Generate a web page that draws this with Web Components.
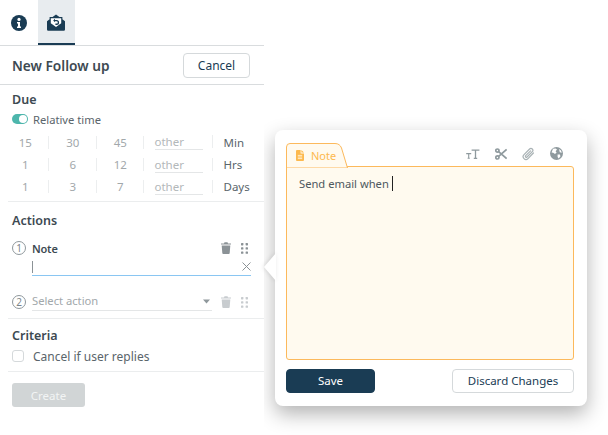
<!DOCTYPE html>
<html>
<head>
<meta charset="utf-8">
<style>
  html, body { margin: 0; padding: 0; background: #fff; }
  body { width: 608px; height: 435px; overflow: hidden; position: relative; font-family: "Noto Sans", sans-serif; color: #3d4a52; }
</style>
</head>
<body>
<fu-panel>
  <fu-tabs></fu-tabs>
  <fu-header title="New Follow up"></fu-header>
  <fu-section heading="Due" style="--pad-top:6px; --pad-bottom:4px">
    <fu-toggle>Relative time</fu-toggle>
    <fu-time-row values="15,30,45" unit="Min"></fu-time-row>
    <fu-time-row values="1,6,12" unit="Hrs"></fu-time-row>
    <fu-time-row values="1,3,7" unit="Days"></fu-time-row>
  </fu-section>
  <fu-section heading="Actions" style="--pad-top:10px; --pad-bottom:9px">
    <fu-action num="1" label="Note" active></fu-action>
    <fu-action num="2" label="Select action"></fu-action>
  </fu-section>
  <fu-section heading="Criteria" style="--pad-top:8px; --pad-bottom:7px">
    <fu-check>Cancel if user replies</fu-check>
  </fu-section>
  <fu-create>Create</fu-create>
</fu-panel>
<fu-popover>Send email when</fu-popover>

<script>
const NAVY = '#1a3c54';

const icons = {
  info: `<svg width="16" height="16" viewBox="0 0 16 16"><circle cx="8" cy="8" r="8" fill="${NAVY}"/><circle cx="8" cy="4.4" r="1.6" fill="#fff"/><path d="M6 7h3v4.6h1v1.5H6v-1.5h1V8.5H6z" fill="#fff"/></svg>`,
  mail: `<svg width="18" height="17" viewBox="0 0 18 17"><path d="M0 7.2 2.6 5.2V3h3L9 .4 12.4 3h3v2.2L18 7.2V15.6a1.2 1.2 0 0 1-1.2 1.2H1.2A1.2 1.2 0 0 1 0 15.6z" fill="${NAVY}"/><path d="M3.8 4.2h10.4v5L9 13 3.8 9.2z" fill="#fff"/><path d="M6.2 6.6 8 4.8v1.1h1.6a2.5 2.5 0 0 1 0 5H8.4V9.6h1.2a1.2 1.2 0 0 0 0-2.4H8v1.1z" fill="${NAVY}"/></svg>`,
  trash: `<svg width="10" height="12" viewBox="0 0 10 12"><path d="M0 1.4h3L3.5.3h3L7 1.4h3v1.2H0zM.7 3.4h8.6L8.7 11a1 1 0 0 1-1 1H2.3a1 1 0 0 1-1-1z" fill="currentColor"/></svg>`,
  grip: `<svg width="7" height="11" viewBox="0 0 7 11"><g fill="currentColor"><rect x="0" y="0" width="2.4" height="2.4" rx=".6"/><rect x="4.6" y="0" width="2.4" height="2.4" rx=".6"/><rect x="0" y="4.2" width="2.4" height="2.4" rx=".6"/><rect x="4.6" y="4.2" width="2.4" height="2.4" rx=".6"/><rect x="0" y="8.4" width="2.4" height="2.4" rx=".6"/><rect x="4.6" y="8.4" width="2.4" height="2.4" rx=".6"/></g></svg>`,
  close: `<svg width="9" height="9" viewBox="0 0 9 9"><path d="M.5.5l8 8M8.5.5l-8 8" stroke="#8b9296" stroke-width="1" fill="none"/></svg>`,
  doc: `<svg width="8" height="11" viewBox="0 0 8 11"><path d="M0 1a1 1 0 0 1 1-1h3.6v3.4H8V10a1 1 0 0 1-1 1H1a1 1 0 0 1-1-1zM5.4 0 8 2.6H5.4z" fill="#fdb94e"/><path d="M1.8 5.4h4.4M1.8 7h4.4M1.8 8.6h4.4" stroke="#fff7e6" stroke-width=".8"/></svg>`,
  textSize: `<svg width="14" height="10" viewBox="0 0 14 10"><g fill="none" stroke="#8f9a9e" stroke-width="1.3"><path d="M5.6 1.1H13.4M9.5 1v8.2M7.8 9.3h3.4"/><path d="M.2 4.6h5M2.7 4.6v4.6M1.6 9.3h2.2" stroke-width="1.1"/></g></svg>`,
  cut: `<svg width="12" height="12" viewBox="0 0 12 12"><g fill="none" stroke="#8f9a9e" stroke-width="1.7"><circle cx="2.4" cy="2.6" r="1.6"/><circle cx="2.4" cy="9.4" r="1.6"/><path d="M3.6 3.6 11.6 10.6M3.6 8.4 11.6 1.4"/></g></svg>`,
  clip: `<svg width="13" height="14" viewBox="0 0 13 14"><path d="M11.4 6 6 11.6a2.8 2.8 0 0 1-4-4L7.6 2a1.9 1.9 0 0 1 2.7 2.7L5 10a.9.9 0 0 1-1.3-1.3L8.6 3.8" fill="none" stroke="#a9b2b5" stroke-width="1.2" stroke-linecap="round"/></svg>`,
  globe: `<svg width="13" height="13" viewBox="0 0 13 13"><circle cx="6.5" cy="6.5" r="6.5" fill="#8f9a9e"/><path d="M3 1.8 5.6 1.4 7 2.6 5.6 4.2 6.6 5.4 5 7 3.2 5.8 1.6 5.6ZM7.6 7.4 10 7.6 10.4 9.4 8.6 11.4 7.6 10ZM9 2l2 1.4.8 2.4-2-.6z" fill="#fff"/></svg>`,
  arrow: `<svg width="7" height="5" viewBox="0 0 7 5"><path d="M0 .5h7L3.500 4.500z" fill="currentColor"/></svg>`
};

// small helper so each component only writes its css + html
class Base extends HTMLElement {
  render(html) {
    if (!this.shadowRoot) this.attachShadow({mode: 'open'});
    this.shadowRoot.innerHTML = html;
  }
}

class FuPanel extends Base {
  connectedCallback() {
    this.render(`<style>
      :host { display: block; width: 264px; height: 435px; background: #fff; position: relative; z-index: 2; box-sizing: border-box; }
    </style><slot></slot>`);
  }
}

class FuTabs extends Base {
  connectedCallback() {
    this.render(`<style>
      :host { display: flex; height: 46px; box-sizing: border-box; border-bottom: 1px solid #d9dcde; }
      .tab { width: 37.5px; height: 45px; box-sizing: border-box; display: flex; align-items: center; justify-content: center; padding-top: 1px; }
      .tab.on { background: #e8ecef; border-bottom: 2px solid ${NAVY}; padding-top: 2px; }
    </style>
    <div class="tab">${icons.info}</div>
    <div class="tab on">${icons.mail}</div>`);
  }
}

class FuHeader extends Base {
  connectedCallback() {
    this.render(`<style>
      :host { display: flex; align-items: center; justify-content: space-between; height: 38px; padding: 0 14px 0 12px; border-bottom: 1px solid #d9dcde; box-sizing: content-box; }
      h1 { margin: 0; font-size: 13.7px; font-weight: 600; color: #3d4a52; }
      button { width: 67px; height: 25px; border: 1px solid #d5d9db; border-radius: 4px; background: #fff; color: ${NAVY}; font: 12px "Noto Sans", sans-serif; padding: 0; }
    </style>
    <h1>${this.getAttribute('title')}</h1><button>Cancel</button>`);
  }
}

class FuSection extends Base {
  connectedCallback() {
    this.render(`<style>
      :host { display: block; padding: var(--pad-top) 0 var(--pad-bottom) 12px; position: relative; }
      :host::after { content: ""; position: absolute; left: 8px; right: 0; bottom: 0; height: 1px; background: #ebedee; }
      h2 { margin: 0 0 3px; font-size: 12.5px; line-height: 17px; font-weight: 600; color: #3d4a52; }
    </style>
    <h2>${this.getAttribute('heading')}</h2><slot></slot>`);
  }
}

class FuToggle extends Base {
  connectedCallback() {
    this.render(`<style>
      :host { display: flex; align-items: center; gap: 5px; height: 16px; font-size: 11.2px; color: #5a656b; margin-bottom: 4px; }
      .t { width: 16px; height: 10px; border-radius: 5px; background: #4db6ac; position: relative; }
      .t::after { content: ""; position: absolute; right: 1px; top: 1px; width: 8px; height: 8px; border-radius: 50%; background: #fff; }
    </style><span class="t"></span><slot></slot>`);
  }
}

class FuTimeRow extends Base {
  connectedCallback() {
    const vals = this.getAttribute('values').split(',');
    this.render(`<style>
      :host { display: flex; align-items: center; height: 22.4px; margin-left: -10.5px; font-size: 11.5px; color: #a2a8ab; }
      .c { width: 47.5px; text-align: center; position: relative; }
      .c::after, .o::after { content: ""; position: absolute; right: 0; top: 1px; height: 13px; width: 1px; background: #eceeef; }
      .o { width: 68.5px; position: relative; box-sizing: border-box; }
      .o span { display: block; margin-left: 10.5px; width: 48px; line-height: 15px; border-bottom: 1px solid #e4e6e7; color: #b3b8ba; }
      .u { padding-left: 11px; color: #5a656b; }
    </style>
    ${vals.map(v => `<div class="c">${v}</div>`).join('')}
    <div class="o"><span>other</span></div><div class="u">${this.getAttribute('unit')}</div>`);
  }
}

class FuAction extends Base {
  connectedCallback() {
    const active = this.hasAttribute('active');
    const body = active
      ? `<div class="row"><span class="label">${this.getAttribute('label')}</span><span class="ic">${icons.trash}</span><span class="gr">${icons.grip}</span></div>
         <div class="input"><i></i><b>${icons.close}</b></div>`
      : `<div class="row dim"><span class="sel">${this.getAttribute('label')}<em>${icons.arrow}</em></span><span class="ic">${icons.trash}</span><span class="gr">${icons.grip}</span></div>`;
    this.render(`<style>
      :host { display: block; position: relative; padding-left: 20px; padding-right: 13px; font-size: 11.2px; color: #5a656b; }
      :host([active]) { margin: 11px 0 18px; }
      .num { position: absolute; left: 0; top: 1px; width: 12px; height: 12px; border: 1px solid #8f989c; border-radius: 50%; font-size: 10px; line-height: 12px; text-align: center; color: #7c858a; }
      .row { display: flex; align-items: center; height: 16px; }
      .label { flex: 1; font-size: 11px; letter-spacing: -.2px; font-weight: 600; color: #3d4a52; }
      .sel { flex: 1; margin-right: 9px; display: flex; justify-content: space-between; align-items: center; color: #a2a8ab; border-bottom: 1px solid #e4e6e7; line-height: 16px; height: 16px; padding-bottom: 1px; }
      .sel em { color: #8f989c; font-style: normal; display: flex; margin-right: 2px; }
      .ic { color: #8b9296; display: flex; width: 20px; }
      .gr { color: #8b9296; display: flex; width: 10px; justify-content: flex-start; }
      .dim .ic, .dim .gr { color: #c8cccf; }
      .input { height: 17px; margin-top: 2px; border-bottom: 1px solid #8ac6f2; display: flex; align-items: center; justify-content: space-between; }
      .input i { display: block; width: 1px; height: 12px; background: #8b9296; }
      .input b { display: flex; }
    </style><span class="num">${this.getAttribute('num')}</span>${body}`);
  }
}

class FuCheck extends Base {
  connectedCallback() {
    this.render(`<style>
      :host { display: flex; align-items: center; gap: 9px; height: 18px; font-size: 12px; color: #5a656b; margin-top: 1px; }
      i { display: block; width: 10px; height: 10px; border: 1px solid #d5d9db; border-radius: 3px; }
    </style><i></i><slot></slot>`);
  }
}

class FuCreate extends Base {
  connectedCallback() {
    this.render(`<style>
      :host { display: flex; align-items: center; justify-content: center; width: 73px; height: 24px; margin: 11px 0 0 12px; border-radius: 3px; background: #d1d5d6; color: #f2f4f4; font-size: 11.5px; }
    </style><slot></slot>`);
  }
}

class FuPopover extends Base {
  connectedCallback() {
    this.render(`<style>
      :host { position: absolute; left: 275px; top: 130px; width: 312px; height: 276px; }
      .box { position: absolute; inset: 0; z-index: 1; box-sizing: border-box; background: #fff; border-radius: 8px; box-shadow: 0 8px 20px rgba(0,0,0,.3); padding: 12px 13px 13px 11px; display: flex; flex-direction: column; }
      .tip { position: absolute; z-index: 3; left: -11px; top: 123px; width: 12px; height: 28px; display: block; filter: drop-shadow(-1px 0 2px rgba(0,0,0,.12)); }
      .top { display: flex; justify-content: space-between; align-items: flex-end; height: 24px; }
      .note { position: relative; width: 61px; height: 24px; margin-bottom: -1px; z-index: 1; display: flex; align-items: center; gap: 7px; padding-left: 10px; box-sizing: border-box; font-size: 11px; color: #fdb94e; }
      .note svg.shape { position: absolute; left: 0; top: 0; z-index: -1; }
      .tools { display: flex; gap: 15px; align-items: center; padding: 0 11px 1px 0; height: 24px; box-sizing: border-box; }
      .tools span { display: flex; }
      .ed { flex: 1; background: #fffaef; border: 1px solid #fcb95c; border-radius: 0 3px 3px 3px; padding: 9px 12px; font-size: 11.2px; color: #4e585e; line-height: 16px; }
      .ed i { display: inline-block; width: 1px; height: 15px; background: #222; vertical-align: -3px; margin-left: 3px; }
      .btns { display: flex; justify-content: space-between; margin-top: 9px; }
      button { height: 24px; padding: 0 0 1px; font: 11.5px "Noto Sans", sans-serif; border-radius: 4px; }
      .save { width: 89px; background: ${NAVY}; border: 1px solid ${NAVY}; color: #fff; }
      .disc { width: 122px; background: #fff; border: 1px solid #d5d9db; color: ${NAVY}; }
    </style>
    <svg class="tip" viewBox="0 0 12 28"><path d="M12 0 0 14 12 28z" fill="#fff"/></svg>
    <div class="box">
      <div class="top">
        <div class="note">
          <svg class="shape" width="63" height="25" viewBox="0 0 63 25"><path d="M.5 25V4a3.500 3.500 0 0 1 3.500-3.500H49a7 7 0 0 1 6.500 4.500L61.500 25z" fill="#fffaef" stroke="#fcb95c"/></svg>
          ${icons.doc}<span>Note</span>
        </div>
        <div class="tools"><span>${icons.textSize}</span><span>${icons.cut}</span><span>${icons.clip}</span><span>${icons.globe}</span></div>
      </div>
      <div class="ed"><slot></slot><i></i></div>
      <div class="btns"><button class="save">Save</button><button class="disc">Discard Changes</button></div>
    </div>`);
  }
}

customElements.define('fu-panel', FuPanel);
customElements.define('fu-tabs', FuTabs);
customElements.define('fu-header', FuHeader);
customElements.define('fu-section', FuSection);
customElements.define('fu-toggle', FuToggle);
customElements.define('fu-time-row', FuTimeRow);
customElements.define('fu-action', FuAction);
customElements.define('fu-check', FuCheck);
customElements.define('fu-create', FuCreate);
customElements.define('fu-popover', FuPopover);
</script>
</body>
</html>
